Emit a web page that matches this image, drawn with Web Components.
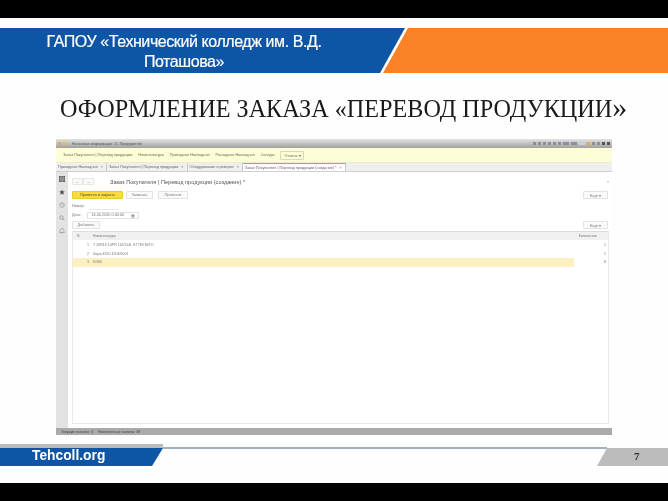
<!DOCTYPE html>
<html lang="ru"><head><meta charset="utf-8"><title>Слайд</title>
<style>
html,body{margin:0;padding:0;background:#fff}
body{width:668px;height:501px;overflow:hidden;font-family:"Liberation Sans",Arial,sans-serif}
</style></head><body>
<x-slide>
  <x-band slot="band">ГАПОУ «Технический колледж им. В.Д. Поташова»</x-band>
  <x-heading slot="heading">ОФОРМЛЕНИЕ ЗАКАЗА «ПЕРЕВОД ПРОДУКЦИИ<span style="font-size:30px;line-height:0">»</span></x-heading>
  <x-app slot="app"></x-app>
  <x-foot slot="foot"></x-foot>
</x-slide>
<script>
function def(name, css, html){
  customElements.define(name, class extends HTMLElement{
    constructor(){super();const r=this.attachShadow({mode:'open'});r.innerHTML='<style>'+css+'</style>'+html;}
  });
}
def('x-slide',`
:host{display:flex;flex-direction:column;width:668px;height:501px;background:#fff}
.bar{height:18px;background:#000;flex:none}
.main{flex:1;display:flex;flex-direction:column;min-height:0;background:#fefefe}
`,`<div class="bar"></div><div class="main"><slot name="band"></slot><slot name="heading"></slot><slot name="app"></slot><slot name="foot"></slot></div><div class="bar"></div>`);

def('x-band',`
:host{display:flex;height:45px;margin-top:10px;flex:none;filter:blur(.4px)}
.blue{width:405px;flex:none;background:#0e55a5;clip-path:polygon(0 0,100% 0,380px 100%,0 100%);box-sizing:border-box;padding:4px 0 0 41px;text-align:center;color:#fff;font:400 16px/20px "Liberation Sans",Arial,sans-serif;letter-spacing:-.42px;-webkit-text-stroke:.2px #fff}
.blue div{width:286px}
.orange{flex:1;margin-left:-22px;background:#fb8126;clip-path:polygon(25px 0,100% 0,100% 100%,0 100%)}
`,`<div class="blue"><div><slot></slot></div></div><div class="orange"></div>`);

def('x-heading',`
:host{display:block;flex:none;height:50px;margin-top:11px;padding-left:60px;font:400 24.2px/50px "Liberation Serif","Times New Roman",serif;color:#1a1a1a;white-space:nowrap;filter:blur(.35px)}
`,`<slot></slot>`);

def('x-tab',`
:host{display:flex;align-items:center;gap:3px;height:100%;padding:0 3px 0 2px;border-right:1px solid #c9c9c9;font-size:3.8px;color:#666;white-space:nowrap}
:host([active]){background:#fff;border-top:1px solid #7fb0a0;box-sizing:border-box}
`,`<slot></slot><span>×</span>`);

def('x-btn',`
:host{display:inline-flex;align-items:center;justify-content:center;box-sizing:border-box;height:7.5px;background:#fafafa;border:1px solid #e2e2e2;border-radius:1px;font-size:3.8px;color:#777;white-space:nowrap}
:host([primary]){background:#fbdc3c;border-color:#e9c92e;color:#5b4f10}
`,`<slot></slot>`);

def('x-row',`
:host{display:flex;align-items:center;height:8.5px;font-size:3.6px;color:#777;white-space:nowrap}
:host([sel]) .hl{background:#fdf0c0}
.hl{display:flex;align-items:center;width:501px;height:100%}
.n{width:16px;text-align:right;margin-right:4px;flex:none}
.q{margin-left:auto;padding-right:2px}
`,`<div class="hl"><span class="n"><slot name="n"></slot></span><slot></slot></div><span class="q"><slot name="q"></slot></span>`);

def('x-app',`
:host{display:flex;flex-direction:column;flex:none;box-sizing:border-box;width:556px;height:296px;margin:5px 0 0 56px;font-family:"Liberation Sans",Arial,sans-serif;background:#fff;filter:blur(.6px)}
.title{flex:none;height:9px;background:linear-gradient(#e2e2e2,#a0a0a0);display:flex;align-items:center;font-size:3.6px;color:#555;padding:0 2px;gap:2px}
.dot{width:3px;height:3px;border-radius:50%;background:#f0a030;flex:none}
.tools{margin-left:auto;display:flex;gap:2px;align-items:center}
.tools i{display:block;width:3px;height:2.5px;background:#8a8f96}
.tools i.o{background:#e8a948}
.menu{flex:none;height:15px;background:#fdfdd8;display:flex;align-items:center;gap:6px;padding-left:7px;font-size:3.8px;color:#6c6c50;border-bottom:1px solid #ececd0;box-sizing:border-box}
.rep{border:1px solid #d8d8b8;padding:1px 0;width:22px;text-align:center;border-radius:1px;flex:none}
.tabs{flex:none;height:9px;background:#efefef;display:flex;align-items:stretch;border-bottom:1px solid #cfcfcf;box-sizing:border-box}
.body{flex:1;display:flex;min-height:0}
.side{flex:none;width:12px;background:#e3e3e3;display:flex;flex-direction:column;align-items:center;gap:7px;padding-top:4px;box-sizing:border-box}
.side svg{width:6px;height:6px;display:block}
.content{flex:1;display:flex;flex-direction:column;min-width:0;padding:5px 3px 4px 4px;background:#fff}
.head{display:flex;align-items:center;height:9px;flex:none}
.nav{display:flex;gap:0}
.nav x-btn{width:11px;border-color:#e6e6e6}
.h{font-size:5.6px;color:#555;margin-left:16px;white-space:nowrap}
.star{margin-left:auto;font-size:4px;color:#888;padding-right:0}
.cmds{display:flex;align-items:center;margin-top:5px;flex:none;height:8px}
.cmds x-btn{margin-right:3px}
.more{margin-left:auto;margin-right:1px!important;width:25px}
.f1{font-size:3.8px;color:#777;height:8px;display:flex;align-items:center;flex:none;margin-top:3px}
.inp{border:1px solid #e2e2e2;height:7px;box-sizing:border-box;width:52px;display:flex;align-items:center;padding:0 3px;justify-content:space-between;margin-left:6px}
.inp2{margin-left:4px;border-bottom:1px solid #e8e8e8;width:30px;height:6px}
.add{display:flex;align-items:center;justify-content:space-between;height:8px;flex:none;margin-top:2px}
.table{flex:1;margin-top:2px;border:1px solid #e9e9e9;border-top:1px solid #dcdcdc;display:flex;flex-direction:column;min-height:0}
.thead{display:flex;align-items:center;height:8px;background:#f0f0f0;font-size:3.4px;color:#777;flex:none;margin-bottom:1px}
.thead .a{width:20px;padding-left:4px;box-sizing:border-box}
.thead .c{margin-left:auto;padding-right:11px}
.status{flex:none;height:7px;background:#aaaaaa;display:flex;align-items:center;gap:5px;font-size:3.6px;color:#444;padding-left:5px}
`,`
<div class="title"><span class="dot"></span><span class="dot" style="background:#e8c040"></span><span style="margin-left:4px">Налоговая информация: 1С Предприятие</span>
<div class="tools"><i></i><i></i><i></i><i></i><i></i><i></i><i style="width:6px"></i><i style="width:6px"></i><i style="width:6px;background:#c8d0e0"></i><i class="o"></i><i></i><i></i><i style="background:#555"></i><i style="background:#555"></i></div></div>
<div class="menu"><span>Заказ Покупателя | Перевод продукции</span><span>Номенклатура</span><span>Приходная Накладная</span><span>Расходная Накладная</span><span>Склады</span><span class="rep">Отчеты ▾</span></div>
<div class="tabs"><x-tab>Приходная Накладная</x-tab><x-tab>Заказ Покупателя | Перевод продукции</x-tab><x-tab>Оборудование в резерве</x-tab><x-tab active>Заказ Покупателя | Перевод продукции (создание) *</x-tab></div>
<div class="body">
<div class="side">
<svg viewBox="0 0 6 6"><path d="M0 0h6v6H0z" fill="#555"/><path d="M0 2h6M0 4h6M2 0v6M4 0v6" stroke="#ddd" stroke-width=".5"/></svg>
<svg viewBox="0 0 6 6"><path d="M3 .5l.8 1.8 2 .2-1.5 1.3.5 2L3 4.8 1.2 5.8l.5-2L.2 2.500l2-.2z" fill="#555"/></svg>
<svg viewBox="0 0 6 6"><circle cx="3" cy="3" r="2.300" fill="none" stroke="#888" stroke-width=".6"/><path d="M3 1.500V3h1.300" stroke="#888" stroke-width=".5" fill="none"/></svg>
<svg viewBox="0 0 6 6"><circle cx="2.500" cy="2.500" r="1.700" fill="none" stroke="#888" stroke-width=".7"/><path d="M3.800 3.800L5.500 5.500" stroke="#888" stroke-width=".8"/></svg>
<svg viewBox="0 0 6 6"><path d="M3 .5c1.500 0 1.800 1.200 1.800 2.500L5.500 4.500H.5L1.200 3C1.200 1.700 1.500.5 3 .5zM2.300 5h1.400" fill="none" stroke="#888" stroke-width=".6"/></svg>
</div>
<div class="content">
<div class="head"><span class="nav"><x-btn>←</x-btn><x-btn>→</x-btn></span><span class="h">Заказ Покупателя | Перевод продукции (создание) *</span><span class="star">×</span></div>
<div class="cmds"><x-btn primary style="width:51px">Провести и закрыть</x-btn><x-btn style="width:27px">Записать</x-btn><x-btn style="width:30px;margin-left:2px">Провести</x-btn><x-btn class="more">Ещё ▾</x-btn></div>
<div class="f1">Номер:<span class="inp2"></span></div>
<div class="f1" style="margin-top:1px">Дата:<span class="inp"><span>16.06.2020  0:00:00</span><span>▦</span></span></div>
<div class="add"><x-btn style="width:28px">Добавить</x-btn><x-btn style="width:25px;margin-right:1px">Ещё ▾</x-btn></div>
<div class="table">
<div class="thead"><span class="a">N</span><span>Номенклатура</span><span class="c">Количество</span></div>
<x-row><span slot="n">1</span>Т 26R19 14PR 116/114L ST780 80TO<span slot="q">1</span></x-row>
<x-row><span slot="n">2</span>Чери 4320 4204/6001<span slot="q">1</span></x-row>
<x-row sel><span slot="n">3</span>6/300<span slot="q">8</span></x-row>
</div>
</div>
</div>
<div class="status"><span>Текущие вызовы: 3</span><span>Накопленные вызовы: 38</span></div>
`);

def('x-foot',`
:host{display:flex;flex:none;height:22px;margin-top:9px;filter:blur(.4px)}
.left{width:163px;flex:none;display:flex;flex-direction:column}
.grey{height:4px;background:#bcbcbc;flex:none}
.blue{height:18px;background:#0e55a5;clip-path:polygon(0 0,100% 0,152px 100%,0 100%);color:#fff;font:700 13.8px/16px "Liberation Sans",Arial,sans-serif;padding-left:32px;box-sizing:border-box}
.mid{flex:1;height:1.5px;margin-top:3px;background:#9fb2b8}
.right{width:71px;flex:none;margin-left:-10px;margin-top:4px;height:18px;background:#bcbcbc;clip-path:polygon(10px 0,100% 0,100% 100%,0 100%);color:#333;font:700 11px/17px "Liberation Serif",serif;box-sizing:border-box;padding-left:37px}
`,`<div class="left"><div class="grey"></div><div class="blue">Tehcoll.org</div></div><div class="mid"></div><div class="right">7</div>`);
</script>
</body></html>
